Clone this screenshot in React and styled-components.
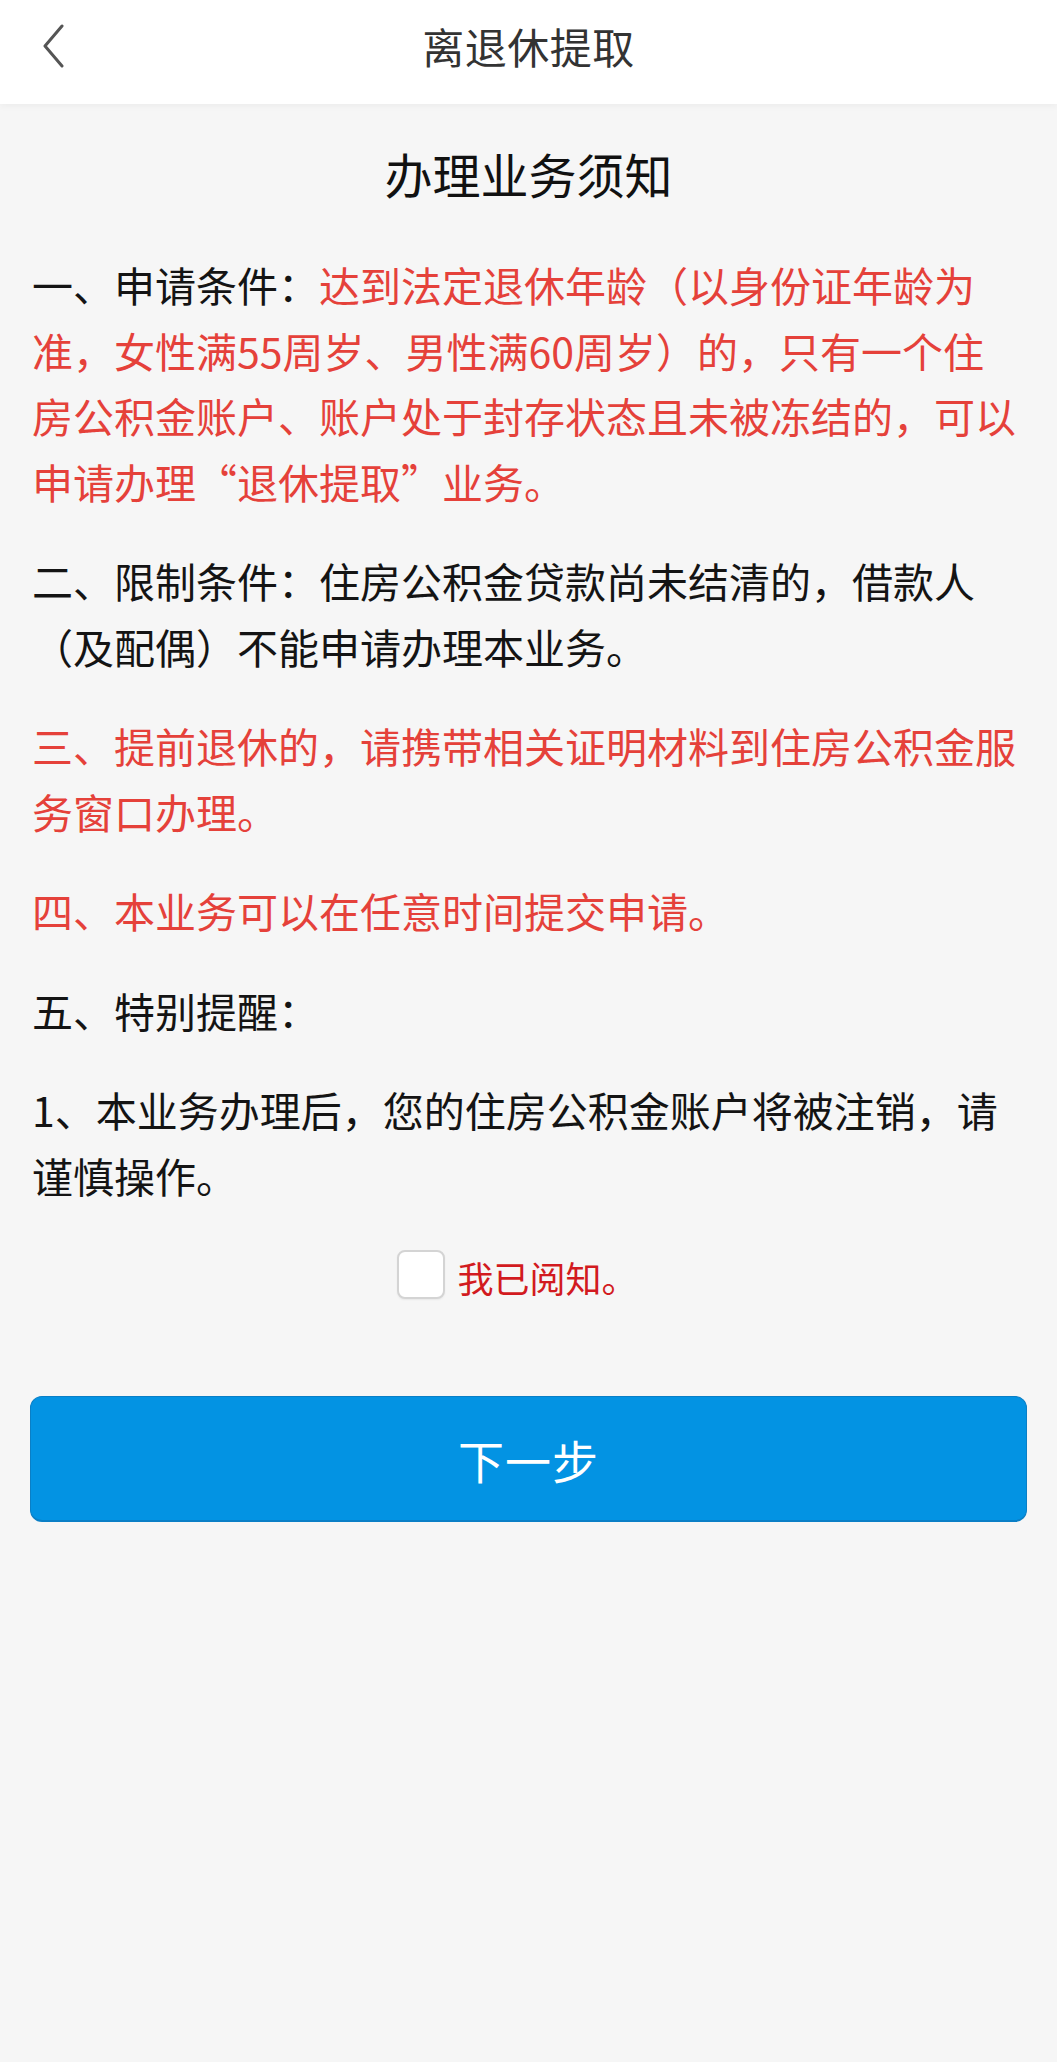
import React, { useState } from "react";
import styled, { createGlobalStyle } from "styled-components";

const GlobalStyle = createGlobalStyle`
  html, body {
    margin: 0;
    padding: 0;
    background: #f6f6f6;
  }
  body {
    font-family: "Noto Sans CJK SC", "Noto Sans", sans-serif;
    -webkit-font-smoothing: antialiased;
  }
  * { box-sizing: border-box; }
`;

const Page = styled.div`
  min-height: 2062px;
  background: #f6f6f6;
  display: flex;
  flex-direction: column;
`;

const Header = styled.header`
  height: 104px;
  padding-bottom: 12px;
  background: #ffffff;
  display: grid;
  grid-template-columns: 1fr auto 1fr;
  align-items: center;
  box-shadow: 0 3px 6px rgba(0, 0, 0, 0.035);
`;

const BackButton = styled.button`
  justify-self: start;
  margin-left: 36px;
  width: 34px;
  height: 48px;
  padding: 0;
  border: none;
  background: transparent;
  display: flex;
  align-items: center;
  justify-content: center;
  cursor: pointer;
`;

const HeaderTitle = styled.h1`
  margin: 0;
  font-size: 42px;
  font-weight: 400;
  color: #333333;
  line-height: 1;
  letter-spacing: 0.5px;
`;

const Content = styled.main`
  display: flex;
  flex-direction: column;
  padding: 36px 32px 0;
`;

const NoticeTitle = styled.h2`
  margin: 0 0 45px;
  text-align: center;
  font-size: 48px;
  font-weight: 400;
  line-height: 67px;
  color: #111111;
`;

const Paragraph = styled.p`
  margin: 0 0 34px;
  font-size: 41px;
  line-height: 65.5px;
  color: ${(p) => (p.$red ? "#e5413a" : "#141414")};
  word-break: break-all;
`;

const Red = styled.span`
  color: #e5413a;
`;

const AgreeRow = styled.label`
  margin-top: 5px;
  align-self: center;
  display: flex;
  align-items: center;
  gap: 12px;
  cursor: pointer;
  margin-left: -22px;
`;

const CheckBox = styled.input`
  appearance: none;
  -webkit-appearance: none;
  margin: 0;
  width: 48px;
  height: 49px;
  border: 2px solid #d4d4d4;
  border-radius: 8px;
  background: #ffffff;
  box-shadow: 0 1px 2px rgba(0, 0, 0, 0.06);
  cursor: pointer;

  &:checked {
    background: #0393e3;
    border-color: #0393e3;
  }
`;

const AgreeText = styled.span`
  font-size: 36px;
  line-height: 48px;
  color: #d21a20;
  padding-top: 6px;
`;

const NextButton = styled.button`
  margin: 95px -2px 0;
  height: 126px;
  border: 1px solid #0a7fc6;
  border-bottom-width: 2px;
  border-radius: 12px;
  background: #0393e3;
  color: #ffffff;
  font-family: "Noto Sans CJK SC", "Noto Sans", sans-serif;
  font-size: 46px;
  font-weight: 400;
  letter-spacing: 1px;
  cursor: pointer;
`;

const ChevronLeft = () => (
  <svg width="24" height="44" viewBox="0 0 24 44" fill="none">
    <polyline
      points="21,2 4,22 21,42"
      stroke="#555555"
      strokeWidth="3"
      strokeLinecap="round"
      strokeLinejoin="round"
    />
  </svg>
);

export default function App() {
  const [agreed, setAgreed] = useState(false);
  return (
    <>
      <GlobalStyle />
      <Page>
        <Header>
          <BackButton aria-label="返回">
            <ChevronLeft />
          </BackButton>
          <HeaderTitle>离退休提取</HeaderTitle>
          <span />
        </Header>
        <Content>
          <NoticeTitle>办理业务须知</NoticeTitle>
          <Paragraph>
            一、申请条件：
            <Red>
              达到法定退休年龄（以身份证年龄为准，女性满55周岁、男性满60周岁）的，只有一个住房公积金账户、账户处于封存状态且未被冻结的，可以申请办理“退休提取”业务。
            </Red>
          </Paragraph>
          <Paragraph>
            二、限制条件：住房公积金贷款尚未结清的，借款人（及配偶）不能申请办理本业务。
          </Paragraph>
          <Paragraph $red>
            三、提前退休的，请携带相关证明材料到住房公积金服务窗口办理。
          </Paragraph>
          <Paragraph $red>四、本业务可以在任意时间提交申请。</Paragraph>
          <Paragraph>五、特别提醒：</Paragraph>
          <Paragraph>
            1、本业务办理后，您的住房公积金账户将被注销，请谨慎操作。
          </Paragraph>
          <AgreeRow>
            <CheckBox
              type="checkbox"
              checked={agreed}
              onChange={(e) => setAgreed(e.target.checked)}
            />
            <AgreeText>我已阅知。</AgreeText>
          </AgreeRow>
          <NextButton type="button">下一步</NextButton>
        </Content>
      </Page>
    </>
  );
}
